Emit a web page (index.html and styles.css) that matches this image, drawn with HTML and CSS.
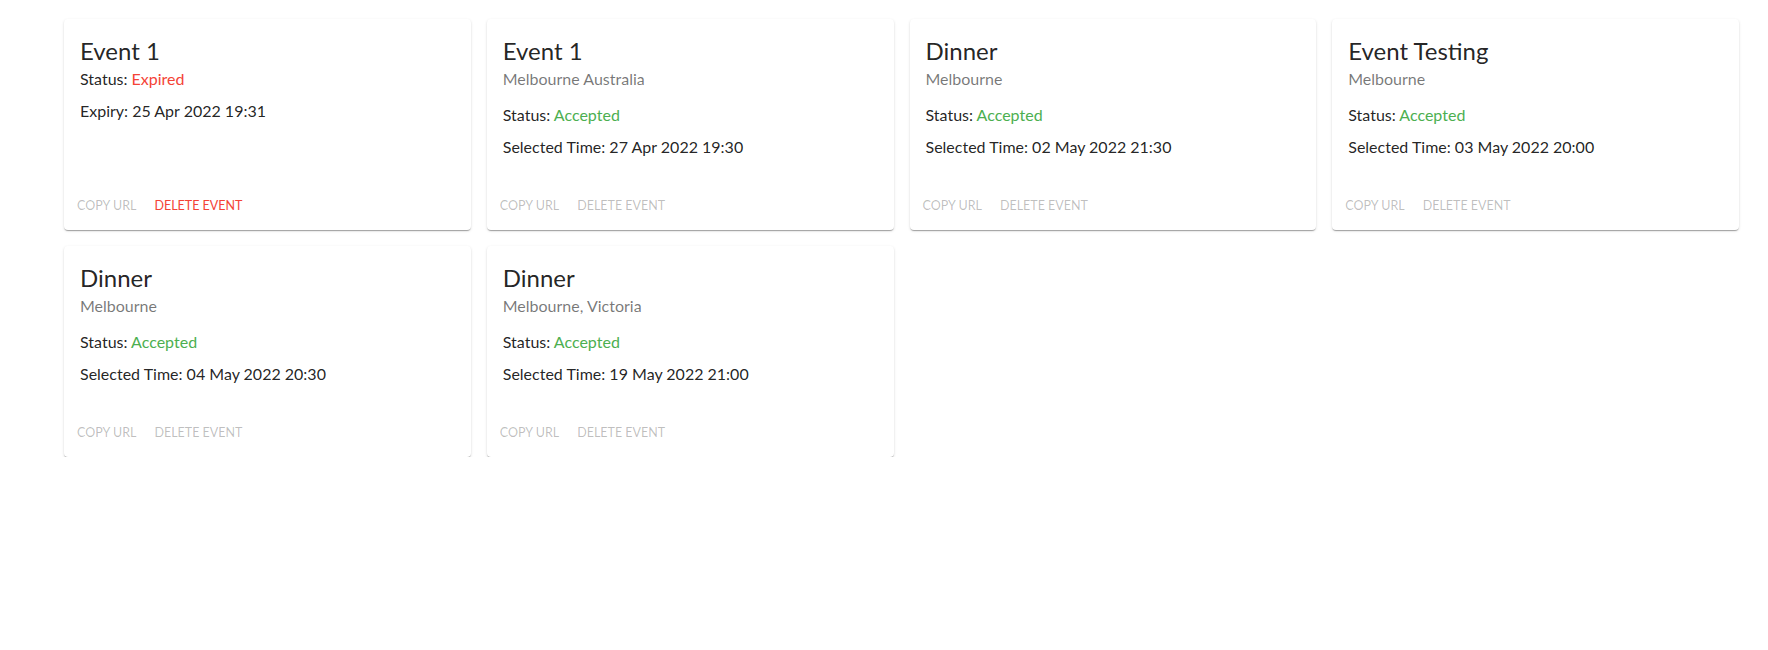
FILE: index.html
```html
<!DOCTYPE html>
<html lang="en">
<head>
<meta charset="utf-8">
<title>Events</title>
<link rel="stylesheet" href="styles.css">
</head>
<body>
<main class="grid">
  <div class="card">
    <div class="content">
      <h5 class="title">Event 1</h5>
      <p class="line">Status: <span class="expired">Expired</span></p>
      <p class="line gap">Expiry: 25 Apr 2022 19:31</p>
    </div>
    <div class="actions">
      <button class="btn">Copy URL</button>
      <button class="btn danger">Delete Event</button>
    </div>
  </div>
  <div class="card">
    <div class="content">
      <h5 class="title">Event 1</h5>
      <p class="sub">Melbourne Australia</p>
      <p class="line">Status: <span class="accepted">Accepted</span></p>
      <p class="line gap">Selected Time: 27 Apr 2022 19:30</p>
    </div>
    <div class="actions">
      <button class="btn">Copy URL</button>
      <button class="btn">Delete Event</button>
    </div>
  </div>
  <div class="card">
    <div class="content">
      <h5 class="title">Dinner</h5>
      <p class="sub">Melbourne</p>
      <p class="line">Status: <span class="accepted">Accepted</span></p>
      <p class="line gap">Selected Time: 02 May 2022 21:30</p>
    </div>
    <div class="actions">
      <button class="btn">Copy URL</button>
      <button class="btn">Delete Event</button>
    </div>
  </div>
  <div class="card">
    <div class="content">
      <h5 class="title">Event Testing</h5>
      <p class="sub">Melbourne</p>
      <p class="line">Status: <span class="accepted">Accepted</span></p>
      <p class="line gap">Selected Time: 03 May 2022 20:00</p>
    </div>
    <div class="actions">
      <button class="btn">Copy URL</button>
      <button class="btn">Delete Event</button>
    </div>
  </div>
  <div class="card">
    <div class="content">
      <h5 class="title">Dinner</h5>
      <p class="sub">Melbourne</p>
      <p class="line">Status: <span class="accepted">Accepted</span></p>
      <p class="line gap">Selected Time: 04 May 2022 20:30</p>
    </div>
    <div class="actions">
      <button class="btn">Copy URL</button>
      <button class="btn">Delete Event</button>
    </div>
  </div>
  <div class="card">
    <div class="content">
      <h5 class="title">Dinner</h5>
      <p class="sub">Melbourne, Victoria</p>
      <p class="line">Status: <span class="accepted">Accepted</span></p>
      <p class="line gap">Selected Time: 19 May 2022 21:00</p>
    </div>
    <div class="actions">
      <button class="btn">Copy URL</button>
      <button class="btn">Delete Event</button>
    </div>
  </div>
</main>
</body>
</html>
```
FILE: styles.css
```css
html, body {
  margin: 0;
  padding: 0;
  background: #ffffff;
}
body {
  font-family: Lato, "Noto Sans", sans-serif;
  color: rgba(0, 0, 0, 0.87);
}
.grid {
  display: grid;
  grid-template-columns: repeat(4, 1fr);
  gap: 16px;
  padding: 19px 29px 0 64px;
}
.card {
  display: flex;
  flex-direction: column;
  background: #fff;
  border-radius: 4px;
  min-height: 211px;
  box-shadow: 0px 2px 1px -1px rgba(0,0,0,0.2), 0px 1px 1px 0px rgba(0,0,0,0.14), 0px 1px 3px 0px rgba(0,0,0,0.12);
}
.content {
  flex: 1;
  padding: 16px 16px 8px;
}
.title {
  margin: 0;
  font-size: 24px;
  font-weight: 400;
  line-height: 32px;
}
.sub {
  margin: 0 0 12px;
  font-size: 16px;
  line-height: 24px;
  color: rgba(0, 0, 0, 0.54);
}
.line {
  margin: 0;
  font-size: 16px;
  line-height: 24px;
}
.gap {
  margin-top: 8px;
  margin-bottom: 8px;
}
.expired { color: #f44336; }
.accepted { color: #4caf50; }
.actions {
  display: flex;
  align-items: center;
  padding: 8px;
}
.btn {
  font-family: inherit;
  font-size: 12.5px;
  font-weight: 400;
  line-height: 22.75px;
  letter-spacing: 0;
  text-transform: uppercase;
  background: none;
  border: 0;
  padding: 4px 5px;
  min-width: 64px;
  color: rgba(0, 0, 0, 0.26);
  text-align: left;
}
.btn + .btn { margin-left: 8px; }
.btn.danger { color: #f44336; }
```
